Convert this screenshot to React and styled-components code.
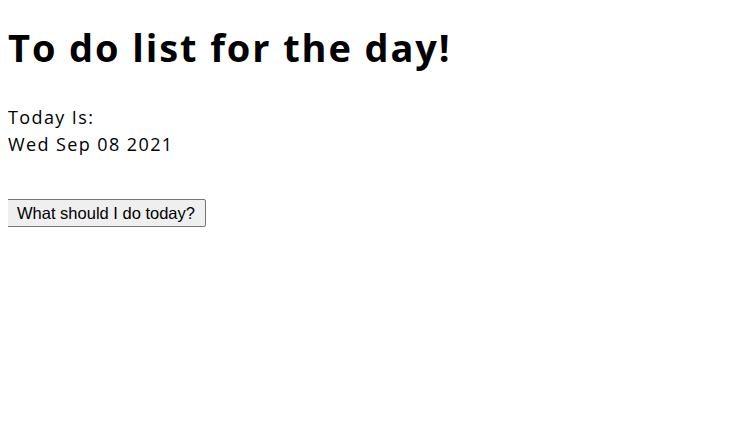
import React from "react";
import styled, { createGlobalStyle } from "styled-components";

const GlobalStyle = createGlobalStyle`
  body {
    margin: 8px;
    background: #ffffff;
    color: #000000;
    font-family: "Open Sans", "Noto Sans", sans-serif;
  }
`;

const Title = styled.h1`
  margin: 20px 0 0;
  font-size: 38px;
  line-height: 38px;
  font-weight: 700;
  letter-spacing: 1.9px;
`;

const DateBlock = styled.div`
  margin-top: 38px;
  font-size: 18px;
  line-height: 27px;
  letter-spacing: 1.4px;
`;

const Line = styled.div``;

const AskButton = styled.button`
  display: block;
  margin: 41px 0 0 -2px;
  height: 28px;
  width: 200px;
  padding: 0;
  font-family: "Liberation Sans", Arial, sans-serif;
  font-size: 16.5px;
  color: #000000;
  background: #efefef;
  border: 1px solid #767676;
  border-radius: 2px;
`;

function App() {
  const today = "Wed Sep 08 2021";
  return (
    <>
      <GlobalStyle />
      <Title>To do list for the day!</Title>
      <DateBlock>
        <Line>Today Is:</Line>
        <Line>{today}</Line>
      </DateBlock>
      <AskButton>What should I do today?</AskButton>
    </>
  );
}

export default App;
